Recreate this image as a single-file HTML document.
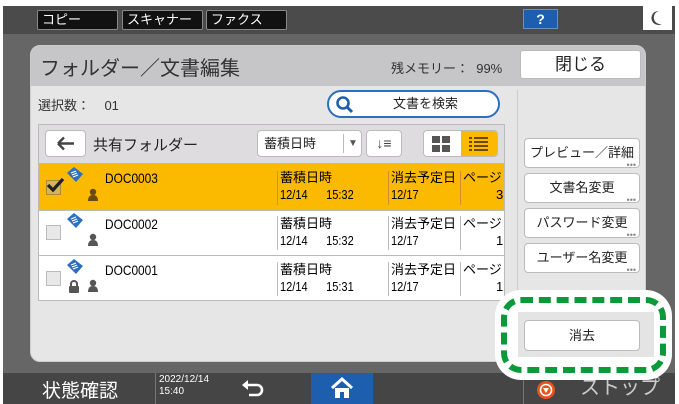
<!DOCTYPE html>
<html><head><meta charset="utf-8"><style>
*{margin:0;padding:0;box-sizing:border-box}
body{width:679px;height:404px;overflow:hidden;background:#fff;font-family:"Liberation Sans","Noto Sans CJK JP",sans-serif;position:relative}
.a{position:absolute}
.tab{position:absolute;top:10px;height:20px;background:#111;border:1px solid #888;border-radius:2px;color:#fff;font-size:13px;line-height:18px;padding-left:4px}
.btn{position:absolute;background:#fff;border:1px solid #bbb;border-radius:4px;font-size:13px;color:#222;text-align:center}
.rb{position:absolute;left:524px;width:116px;height:30px;background:#fff;border:1px solid #bbb;border-radius:4px;font-size:13px;color:#222;text-align:center;line-height:28px}
.rb i{position:absolute;right:3px;bottom:-3px;font-style:normal;font-size:9px;color:#888;line-height:9px}
.row{position:absolute;left:39px;width:465px;font-size:13px;color:#222}
.t{position:absolute;font-size:13px;line-height:16px}
.n{display:inline-block;transform:scaleX(0.85);transform-origin:left}
.vd{position:absolute;width:1px;background:#bbb}
</style></head><body>
<div class="a" style="left:3px;top:6px;width:672px;height:398px;background:#666"></div>
<div class="a" style="left:3px;top:6px;width:672px;height:28px;background:#4b4b4b"></div>
<div class="tab" style="left:37px;width:81px">コピー</div>
<div class="tab" style="left:122px;width:81px">スキャナー</div>
<div class="tab" style="left:206px;width:81px">ファクス</div>
<div class="a" style="left:523px;top:9px;width:35px;height:20px;background:#1d5fae;border:1px solid #6c8fc0;color:#fff;font-size:14px;font-weight:bold;text-align:center;line-height:18px">?</div>
<div class="a" style="left:643px;top:6px;width:29px;height:24px;background:#fff"><svg width="29" height="24"><path d="M16 5a7 7 0 1 0 3 13a6 6 0 0 1 -3 -13z" fill="#444"/></svg></div>

<div class="a" style="left:30px;top:45px;width:616px;height:317px;background:#e6e6e6;border-radius:10px;overflow:hidden;border:1px solid #ccc">
 <div class="a" style="left:0;top:0;width:616px;height:40px;background:#c6c5c7"></div>
</div>
<div class="a" style="left:40px;top:52px;font-size:20px;color:#333">フォルダー／文書編集</div>
<div class="a" style="left:391px;top:58px;font-size:13px;color:#333">残メモリー：&nbsp; 99%</div>
<div class="btn" style="left:520px;top:50px;width:121px;height:29px;font-size:17px;line-height:27px;border-radius:3px">閉じる</div>
<div class="a" style="left:38px;top:95px;font-size:13px;color:#333">選択数：&nbsp;&nbsp;&nbsp; 01</div>
<div class="a" style="left:327px;top:90px;width:173px;height:28px;background:#fff;border:2px solid #2a6fc0;border-radius:14px;font-size:13px;line-height:24px;color:#222"><svg class="a" style="left:6px;top:3px" width="20" height="20"><circle cx="8" cy="8" r="5.5" fill="none" stroke="#1f5fae" stroke-width="2.6"/><path d="M12 12l5 5" stroke="#1f5fae" stroke-width="3"/></svg><span class="a" style="left:64px">文書を検索</span></div>
<div class="vd" style="left:517px;top:90px;height:200px;background:#ccc"></div>

<div class="a" style="left:38px;top:124px;width:467px;height:177px;border:1px solid #bbb;background:#e6e6e6"></div>
<div class="a" style="left:39px;top:125px;width:465px;height:38px;background:#dedcde"></div>
<div class="btn" style="left:45px;top:130px;width:41px;height:27px"><svg width="39" height="25"><path d="M12 12.5h16M12 12.5l6-6M12 12.5l6 6" stroke="#444" stroke-width="2.4" fill="none"/></svg></div>
<div class="a" style="left:93px;top:134px;font-size:15px;color:#222">共有フォルダー</div>
<div class="btn" style="left:257px;top:130px;width:105px;height:27px;text-align:left;padding-left:6px;line-height:25px">蓄積日時<span class="a" style="left:85px;top:3px;width:1px;height:19px;background:#bbb"></span><span class="a" style="left:90px;top:0;font-size:10px;color:#555">▼</span></div>
<div class="btn" style="left:366px;top:130px;width:36px;height:27px;line-height:25px;font-size:14px;color:#444">↓≡</div>
<div class="btn" style="left:423px;top:130px;width:75px;height:27px;overflow:hidden">
 <svg class="a" style="left:8px;top:5px" width="20" height="17"><rect x="0" y="0" width="8" height="7" fill="#555"/><rect x="10" y="0" width="8" height="7" fill="#555"/><rect x="0" y="9" width="8" height="7" fill="#555"/><rect x="10" y="9" width="8" height="7" fill="#555"/></svg>
 <div class="a" style="left:37px;top:0;width:37px;height:25px;background:#fbb900"><svg class="a" style="left:8px;top:5px" width="20" height="16"><g fill="#6a4a00"><rect x="0" y="1" width="3" height="2"/><rect x="5" y="1" width="14" height="2"/><rect x="0" y="5" width="3" height="2"/><rect x="5" y="5" width="14" height="2"/><rect x="0" y="9" width="3" height="2"/><rect x="5" y="9" width="14" height="2"/><rect x="0" y="13" width="3" height="2"/><rect x="5" y="13" width="14" height="2"/></g></svg></div>
</div>

<div class="row" style="top:163px;height:47px;background:#fbb900"></div>
<div class="row" style="top:210px;height:45px;background:#fff;border-top:1px solid #bbb"></div>
<div class="row" style="top:255px;height:45px;background:#fff;border-top:1px solid #bbb"></div>

<div class="a" style="left:46px;top:180px;width:15px;height:15px;background:#d8b35a;border:1px solid #a88a3a"></div>
<svg class="a" style="left:44px;top:174px" width="22" height="20"><path d="M4 11l5 5 10-11" stroke="#222" stroke-width="3.2" fill="none"/></svg>
<div class="a" style="left:46px;top:225px;width:15px;height:15px;background:#e8e8e8;border:1px solid #bbb"></div>
<div class="a" style="left:46px;top:271px;width:15px;height:15px;background:#e8e8e8;border:1px solid #bbb"></div>

<svg class="a" style="left:66px;top:166px" width="18" height="17"><path d="M1 7l7-6 9 7-7 8z" fill="#2a6fc0"/><path d="M5 7l5-2M6 9l5-2M7 11l5-2" stroke="#fff" stroke-width="1.2"/></svg>
<svg class="a" style="left:66px;top:212px" width="18" height="17"><path d="M1 7l7-6 9 7-7 8z" fill="#2a6fc0"/><path d="M5 7l5-2M6 9l5-2M7 11l5-2" stroke="#fff" stroke-width="1.2"/></svg>
<svg class="a" style="left:66px;top:258px" width="18" height="17"><path d="M1 7l7-6 9 7-7 8z" fill="#2a6fc0"/><path d="M5 7l5-2M6 9l5-2M7 11l5-2" stroke="#fff" stroke-width="1.2"/></svg>
<svg class="a" style="left:87px;top:188px" width="12" height="14"><circle cx="6" cy="4" r="3.2" fill="#6a4a10"/><path d="M1 13q0-6 5-6t5 6z" fill="#6a4a10"/></svg>
<svg class="a" style="left:87px;top:233px" width="12" height="14"><circle cx="6" cy="4" r="3.2" fill="#555"/><path d="M1 13q0-6 5-6t5 6z" fill="#555"/></svg>
<svg class="a" style="left:87px;top:279px" width="12" height="14"><circle cx="6" cy="4" r="3.2" fill="#555"/><path d="M1 13q0-6 5-6t5 6z" fill="#555"/></svg>
<svg class="a" style="left:68px;top:279px" width="12" height="14"><path d="M3 7V5a3 3 0 0 1 6 0v2" stroke="#555" stroke-width="2" fill="none"/><rect x="1" y="7" width="10" height="7" rx="1" fill="#555"/></svg>

<div class="t" style="left:105px;top:170px;font-size:14px"><span class="n">DOC0003</span></div>
<div class="t" style="left:105px;top:216px;font-size:14px"><span class="n">DOC0002</span></div>
<div class="t" style="left:105px;top:262px;font-size:14px"><span class="n">DOC0001</span></div>

<div class="vd" style="left:277px;top:171px;height:34px;background:#c9922a"></div>
<div class="vd" style="left:388px;top:171px;height:34px;background:#c9922a"></div>
<div class="vd" style="left:460px;top:171px;height:34px;background:#c9922a"></div>
<div class="vd" style="left:277px;top:216px;height:34px"></div>
<div class="vd" style="left:388px;top:216px;height:34px"></div>
<div class="vd" style="left:460px;top:216px;height:34px"></div>
<div class="vd" style="left:277px;top:262px;height:34px"></div>
<div class="vd" style="left:388px;top:262px;height:34px"></div>
<div class="vd" style="left:460px;top:262px;height:34px"></div>

<div class="t" style="left:280px;top:170px">蓄積日時</div><div class="t" style="left:280px;top:187px"><span class="n">12/14&nbsp;&nbsp;&nbsp;&nbsp;&nbsp; 15:32</span></div>
<div class="t" style="left:391px;top:170px">消去予定日</div><div class="t" style="left:391px;top:187px"><span class="n">12/17</span></div>
<div class="t" style="left:463px;top:170px">ページ</div><div class="t" style="left:496px;top:187px">3</div>
<div class="t" style="left:280px;top:216px">蓄積日時</div><div class="t" style="left:280px;top:233px"><span class="n">12/14&nbsp;&nbsp;&nbsp;&nbsp;&nbsp; 15:32</span></div>
<div class="t" style="left:391px;top:216px">消去予定日</div><div class="t" style="left:391px;top:233px"><span class="n">12/17</span></div>
<div class="t" style="left:463px;top:216px">ページ</div><div class="t" style="left:496px;top:233px">1</div>
<div class="t" style="left:280px;top:262px">蓄積日時</div><div class="t" style="left:280px;top:279px"><span class="n">12/14&nbsp;&nbsp;&nbsp;&nbsp;&nbsp; 15:31</span></div>
<div class="t" style="left:391px;top:262px">消去予定日</div><div class="t" style="left:391px;top:279px"><span class="n">12/17</span></div>
<div class="t" style="left:463px;top:262px">ページ</div><div class="t" style="left:496px;top:279px">1</div>

<div class="rb" style="top:138px">プレビュー／詳細<i>•••</i></div>
<div class="rb" style="top:173px">文書名変更<i>•••</i></div>
<div class="rb" style="top:208px">パスワード変更<i>•••</i></div>
<div class="rb" style="top:243px">ユーザー名変更<i>•••</i></div>

<div class="a" style="left:3px;top:373px;width:672px;height:31px;background:#454545"></div>
<div class="a" style="left:42px;top:376px;font-size:19px;color:#fff">状態確認</div>
<div class="a" style="left:155px;top:373px;width:1px;height:31px;background:#777"></div>
<div class="a" style="left:159px;top:374px;font-size:10px;color:#fff;line-height:12px">2022/12/14<br>15:40</div>
<svg class="a" style="left:240px;top:377px" width="26" height="22"><path d="M6 8h11a5 5 0 0 1 0 10h-8" stroke="#fff" stroke-width="2.6" fill="none"/><path d="M2 8l6-5v10z" fill="#fff"/></svg>
<div class="a" style="left:311px;top:373px;width:62px;height:31px;background:#1d5fae"><svg class="a" style="left:18px;top:3px" width="26" height="24"><path d="M3 12L13 3l10 9" stroke="#fff" stroke-width="3" fill="none"/><path d="M6 12v10h5v-6h4v6h5V12" fill="#fff"/></svg></div>
<div class="a" style="left:523px;top:373px;width:1px;height:31px;background:#777"></div>
<div class="a" style="left:580px;top:375px;font-size:20px;color:#ccc;line-height:26px">ストップ</div>

<div class="a" style="left:495px;top:290px;width:177px;height:90px;background:#fff;border-radius:26px"></div>
<div class="a" style="left:518px;top:312px;width:136px;height:45px;background:#e4e4e4"></div>
<div class="a" style="left:501px;top:297px;width:165px;height:76px;border:6px dashed #0a9a3a;border-radius:20px"></div>
<div class="rb" style="top:320px;height:31px;line-height:29px">消去</div>
<svg class="a" style="left:536px;top:380px" width="20" height="20"><circle cx="10" cy="10" r="9" fill="#e8521e"/><circle cx="10" cy="10" r="5.5" fill="none" stroke="#fff" stroke-width="1.6"/><path d="M7 8h6l-3 5z" fill="#fff"/></svg>
</body></html>
